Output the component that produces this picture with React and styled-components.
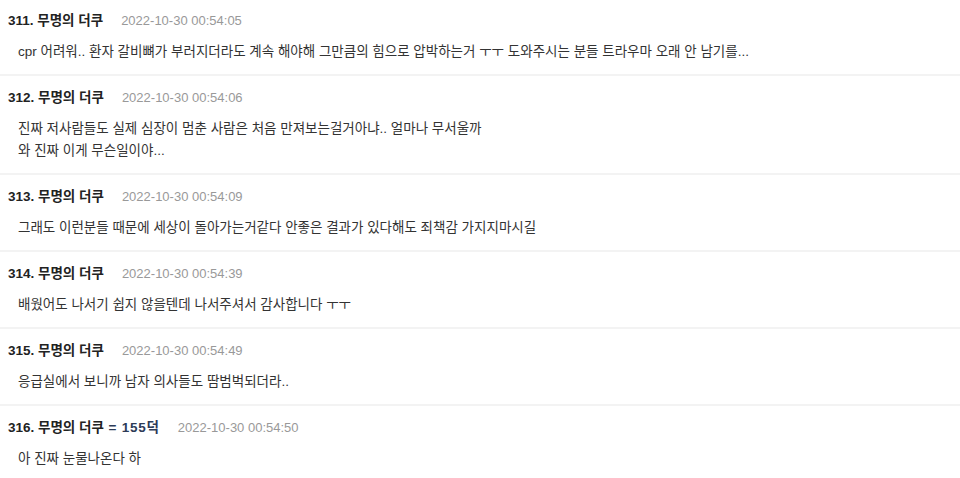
import React from "react";
import styled, { createGlobalStyle } from "styled-components";

const GlobalStyle = createGlobalStyle`
  html, body {
    margin: 0;
    padding: 0;
    background: #fff;
  }
  body {
    font-family: "Liberation Sans", "Noto Sans CJK KR", sans-serif;
    color: #333;
  }
`;

const List = styled.ul`
  list-style: none;
  margin: -1px 0 0;
  padding: 0;
`;

const Item = styled.li`
  padding: 12px 8px 11px;
  border-bottom: 2px solid #f3f3f3;
`;

const Header = styled.div`
  display: flex;
  align-items: center;
  height: 20px;
  line-height: 20px;
`;

const Author = styled.span`
  font-size: 13.5px;
  font-weight: bold;
  color: #222;
`;

const Point = styled.span`
  color: #2d3b57;
  letter-spacing: 0.8px;
`;

const Stamp = styled.span`
  margin-left: 18px;
  font-size: 13px;
  color: #999;
`;

const Body = styled.div`
  margin-top: 10px;
  padding-left: 10px;
  font-size: 13.5px;
  line-height: 22px;
  color: #333;
`;

const comments = [
  {
    no: 311,
    date: "2022-10-30 00:54:05",
    lines: [
      "cpr 어려워.. 환자 갈비뼈가 부러지더라도 계속 해야해 그만큼의 힘으로 압박하는거 ㅜㅜ 도와주시는 분들 트라우마 오래 안 남기를...",
    ],
  },
  {
    no: 312,
    date: "2022-10-30 00:54:06",
    lines: [
      "진짜 저사람들도 실제 심장이 멈춘 사람은 처음 만져보는걸거아냐.. 얼마나 무서울까",
      "와 진짜 이게 무슨일이야...",
    ],
  },
  {
    no: 313,
    date: "2022-10-30 00:54:09",
    lines: ["그래도 이런분들 때문에 세상이 돌아가는거같다 안좋은 결과가 있다해도 죄책감 가지지마시길"],
  },
  {
    no: 314,
    date: "2022-10-30 00:54:39",
    lines: ["배웠어도 나서기 쉽지 않을텐데 나서주셔서 감사합니다 ㅜㅜ"],
  },
  {
    no: 315,
    date: "2022-10-30 00:54:49",
    lines: ["응급실에서 보니까 남자 의사들도 땀범벅되더라.."],
  },
  {
    no: 316,
    date: "2022-10-30 00:54:50",
    point: "155덕",
    lines: ["아 진짜 눈물나온다 하"],
  },
];

export default function App() {
  return (
    <>
      <GlobalStyle />
      <List>
        {comments.map((c) => (
          <Item key={c.no}>
            <Header>
              <Author>
                {c.no}. 무명의 더쿠
                {c.point && <Point> = {c.point}</Point>}
              </Author>
              <Stamp>{c.date}</Stamp>
            </Header>
            <Body>
              {c.lines.map((l, i) => (
                <div key={i}>{l}</div>
              ))}
            </Body>
          </Item>
        ))}
      </List>
    </>
  );
}
